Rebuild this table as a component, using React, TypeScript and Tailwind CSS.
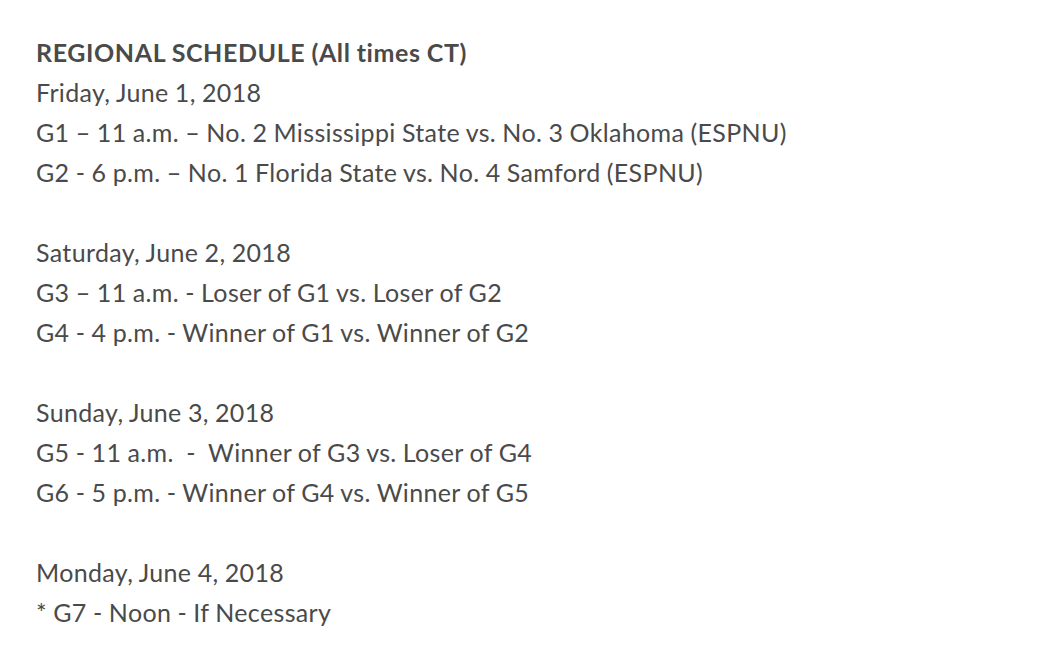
export default function App() {
  const lines: [string, boolean][] = [
    ["REGIONAL SCHEDULE (All times CT)", true],
    ["Friday, June 1, 2018", false],
    ["G1 – 11 a.m. – No. 2 Mississippi State vs. No. 3 Oklahoma (ESPNU)", false],
    ["G2 - 6 p.m. – No. 1 Florida State vs. No. 4 Samford (ESPNU)", false],
    ["", false],
    ["Saturday, June 2, 2018", false],
    ["G3 – 11 a.m. - Loser of G1 vs. Loser of G2", false],
    ["G4 - 4 p.m. - Winner of G1 vs. Winner of G2", false],
    ["", false],
    ["Sunday, June 3, 2018", false],
    ["G5 - 11 a.m.\u00a0 -\u00a0 Winner of G3 vs. Loser of G4", false],
    ["G6 - 5 p.m. - Winner of G4 vs. Winner of G5", false],
    ["", false],
    ["Monday, June 4, 2018", false],
    ["* G7 - Noon - If Necessary", false],
  ];
  return (
    <div className="min-h-screen bg-white pt-8 pl-9 text-[#4a4a4a] font-['Lato',sans-serif] text-[25px] leading-[40px] tracking-[0.35px] [word-spacing:-0.5px]">
      {lines.map(([t, b], i) => (
        <div key={i} className={b ? "font-bold h-10 tracking-[0.6px]" : "h-10"}>
          {t}
        </div>
      ))}
    </div>
  );
}
